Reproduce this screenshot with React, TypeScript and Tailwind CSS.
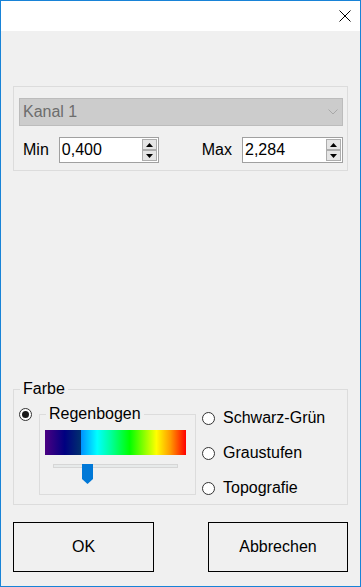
import React from "react";

function Radio({ checked }: { checked?: boolean }) {
  return (
    <span className="flex h-[13px] w-[13px] shrink-0 items-center justify-center rounded-full border border-[#333333] bg-white">
      {checked && <span className="h-[7px] w-[7px] rounded-full bg-[#1a1a1a]" />}
    </span>
  );
}

function SpinButton({ up }: { up?: boolean }) {
  return (
    <span className="flex flex-1 items-center justify-center border border-[#adadad] bg-[#e5e5e5]">
      <svg width="7" height="4" viewBox="0 0 7 4">
        <polygon points={up ? "0,4 3.5,0 7,4" : "0,0 7,0 3.5,4"} fill="#000" />
      </svg>
    </span>
  );
}

function NumBox({ value, wide }: { value: string; wide?: boolean }) {
  return (
    <div className={`flex h-[26px] items-stretch border border-[#a0a0a0] bg-white ${wide ? "w-[101px]" : "w-[100px]"}`}>
      <span className="flex-1 pl-[2px] leading-[24px] text-black">{value}</span>
      <div className="flex w-[16px] flex-col py-px pr-px">
        <SpinButton up />
        <SpinButton />
      </div>
    </div>
  );
}

const schemes = ["Schwarz-Grün", "Graustufen", "Topografie"];

export default function App() {
  return (
    <div className="flex h-[587px] w-[361px] flex-col border border-[#1883d7] bg-[#f0f0f0] font-['Liberation_Sans',Arial,sans-serif] text-[16px] text-black">
      {/* title bar */}
      <div className="flex h-[30px] shrink-0 items-center justify-end bg-white pr-[9px]">
        <svg width="12" height="12" viewBox="0 0 12 12">
          <path d="M0.5 0.5 L11.5 11.5 M11.5 0.5 L0.5 11.5" stroke="#000" strokeWidth="1" />
        </svg>
      </div>

      <div className="flex flex-1 flex-col px-[12px]">
        {/* channel range */}
        <div className="mt-[55px] h-[85px] border border-[#dcdcdc] pt-[11px]">
          <div className="ml-[5px] flex h-[28px] w-[324px] items-center justify-between border border-[#bcbcbc] bg-[#cccccc] pl-[3px] pr-[4px] text-[#6d6d6d]">
            <span>Kanal 1</span>
            <svg width="10" height="6" viewBox="0 0 10 6">
              <polyline points="0.5,0.5 5,5 9.5,0.5" fill="none" stroke="#a8a8a8" strokeWidth="1" />
            </svg>
          </div>
          <div className="mt-[11px] flex items-center pl-[9px] pr-[4px]">
            <span>Min</span>
            <div className="ml-[10px]">
              <NumBox value="0,400" />
            </div>
            <span className="ml-auto">Max</span>
            <div className="ml-[10px]">
              <NumBox value="2,284" wide />
            </div>
          </div>
        </div>

        <div className="flex-1" />

        {/* colour scheme */}
        <fieldset className="h-[125px] border border-[#dcdcdc] px-[5px]">
          <legend className="ml-[1px] px-[3px] leading-[18px]">Farbe</legend>
          <div className="flex">
            <div className="mt-[10px]">
              <Radio checked />
            </div>
            <fieldset className="ml-[7px] mt-[7px] h-[90px] w-[157px] border border-[#dcdcdc] px-[5px]">
              <legend className="ml-[1px] px-[3px] leading-[18px]">Regenbogen</legend>
              <div className="mt-[7px] h-[25px] w-[141px] bg-[linear-gradient(to_right,#4b0082_0%,#000080_14%,#00306e_25.5%,#0090ff_25.5%,#00ffff_37%,#00ff99_47%,#00ff00_60%,#ffff00_79%,#ff9900_89%,#ff0000_100%)]" />
              <div className="relative ml-[8px] mt-[9px] h-[20px] w-[125px]">
                <div className="mt-[6px] h-[4px] border border-[#d6d6d6] bg-[#e7eaea]" />
                <svg className="absolute left-[29px] top-0" width="11" height="20" viewBox="0 0 11 20">
                  <polygon points="0,0 11,0 11,15 5.5,20 0,15" fill="#0078d7" />
                </svg>
              </div>
            </fieldset>
            <div className="ml-[6px] mt-[11px] flex flex-col gap-[17px]">
              {schemes.map((s) => (
                <label key={s} className="flex h-[18px] items-center gap-[8px] leading-[18px]">
                  <Radio />
                  <span>{s}</span>
                </label>
              ))}
            </div>
          </div>
        </fieldset>

        {/* buttons */}
        <div className="mb-[14px] mt-[17px] flex justify-between">
          <button className="h-[50px] w-[141px] border border-black bg-[#f0f0f0]">OK</button>
          <button className="h-[50px] w-[140px] border border-black bg-[#f0f0f0]">Abbrechen</button>
        </div>
      </div>
    </div>
  );
}
